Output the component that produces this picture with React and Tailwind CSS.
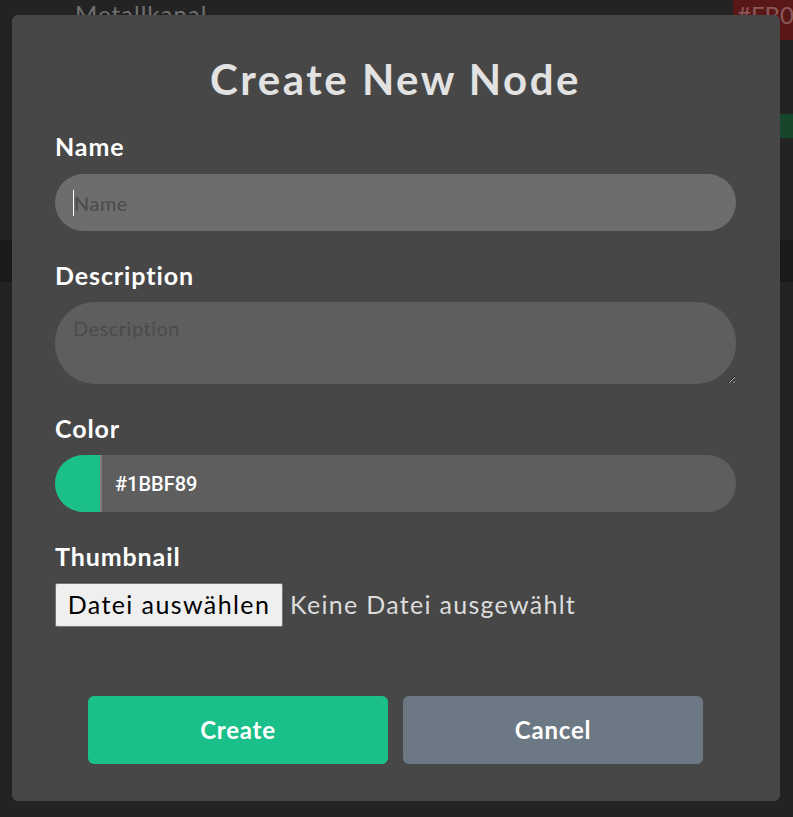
export default function App() {
  const font = { fontFamily: "Lato, 'Noto Sans', sans-serif" };

  return (
    <div className="relative h-[817px] w-full overflow-hidden bg-[#232323]" style={font}>
      {/* background list behind the dialog */}
      <div className="flex flex-col">
        <div className="flex h-[40px] items-start justify-between">
          <span className="-mt-[4px] pl-[75px] text-[24px] tracking-[1px] text-[#707070]">Metallkanal</span>
          <div className="flex h-[40px] w-[60px] items-start bg-[#5a1717] pl-[4px] text-[24px] leading-[30px] text-[#8a5a5a]">#FB0</div>
        </div>
        <div className="flex h-[74px] justify-end pt-[74px]">
          <div className="h-[24px] w-[20px] bg-[#17472a]" />
        </div>
        <div className="mt-[126px] h-[42px] bg-[#1b1b1b]" />
      </div>

      {/* dialog */}
      <div className="absolute left-[12px] top-[15px] flex h-[786px] w-[768px] flex-col rounded-[6px] bg-[#474747] pl-[43px] pr-[44px] pt-[40px]">
        <h1 className="h-[48px] text-center text-[42px] font-bold leading-[48px] tracking-[2.5px] text-[#e2e2e2]">
          Create New Node
        </h1>

        <label className="mt-[27px] h-[32px] text-[25px] font-bold leading-[32px] tracking-[0.9px] text-white">Name</label>
        <div className="mt-[12px] flex h-[57px] items-center rounded-full bg-[#6d6d6d] pl-[18px]">
          <span className="h-[26px] w-[1px] bg-white" />
          <span className="text-[20px] tracking-[0.5px] text-[#4b4b4b]">Name</span>
        </div>

        <label className="mt-[28px] h-[32px] text-[25px] font-bold leading-[32px] tracking-[0.9px] text-white">Description</label>
        <textarea
          placeholder="Description"
          className="mt-[11px] h-[82px] resize rounded-[40px] bg-[#5e5e5e] px-[18px] pt-[14px] text-[20px] leading-[24px] tracking-[0.5px] text-white outline-none placeholder:text-[#4b4b4b]"
        />

        <label className="mt-[28px] h-[32px] text-[25px] font-bold leading-[32px] tracking-[0.9px] text-white">Color</label>
        <div className="mt-[11px] flex h-[57px] overflow-hidden rounded-full bg-[#5e5e5e]">
          <div className="w-[45px] bg-[#1bbf89]" />
          <div className="w-[2px] bg-[#7e7e7e]" />
          <span
            className="flex items-center pl-[13px] text-[20px] font-medium text-white"
            style={{ fontFamily: "Roboto, 'Liberation Sans', sans-serif" }}
          >
            #1BBF89
          </span>
        </div>

        <label className="mt-[28px] h-[32px] text-[25px] font-bold leading-[32px] tracking-[0.9px] text-white">Thumbnail</label>
        <div className="mt-[11px] flex items-center gap-[7px]">
          <div className="flex h-[44px] w-[228px] items-center justify-center rounded-[2px] border border-[#767676] bg-[#efefef] text-[25px] tracking-[1.4px] text-black">
            Datei auswählen
          </div>
          <span className="text-[25px] tracking-[1.3px] text-[#dcdcdc]">Keine Datei ausgewählt</span>
        </div>

        <div className="mt-[69px] flex justify-center gap-[15px]">
          <button className="h-[68px] w-[300px] rounded-[6px] bg-[#1bbf89] text-[24px] font-bold tracking-[0.8px] text-white">Create</button>
          <button className="h-[68px] w-[300px] rounded-[6px] bg-[#6c7883] text-[24px] font-bold tracking-[0.8px] text-white">Cancel</button>
        </div>
      </div>
    </div>
  );
}
